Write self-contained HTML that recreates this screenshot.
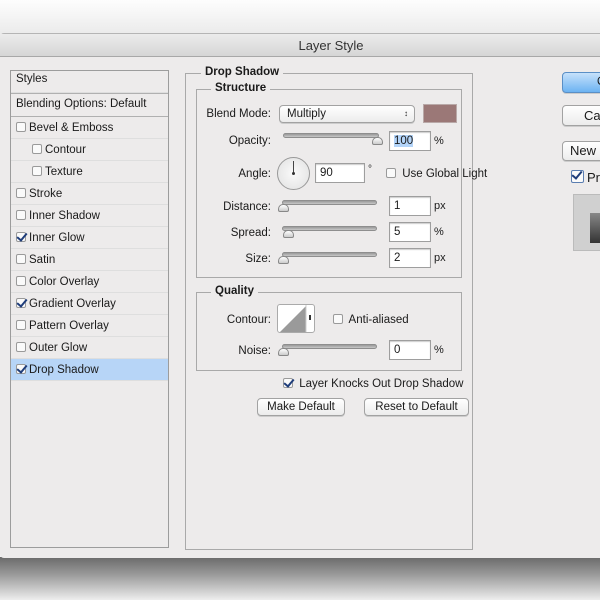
<!DOCTYPE html>
<html><head><meta charset="utf-8"><style>
*{margin:0;padding:0;box-sizing:border-box}
body{width:600px;height:600px;overflow:hidden;position:relative;background:#f4f4f4;font-family:"Lucida Grande","Liberation Sans","DejaVu Sans",sans-serif;font-size:12px;color:#1a1a1a}
.a{position:absolute}
#bgtop{left:0;top:0;width:600px;height:34px;background:linear-gradient(#fdfdfd,#ebebeb)}
#shadow{left:0;top:557px;width:600px;height:43px;background:linear-gradient(#6a6a6a,#999 40%,#d8d8d8 85%,#eee)}
#win{left:0;top:33px;width:600px;height:525px;background:#edebeb;border-radius:4px 0 0 4px;border-top:1px solid #b5b5b5}
#title{left:0;top:34px;width:600px;height:23px;background:linear-gradient(#ececec,#d6d6d6);border-bottom:1px solid #a8a8a8;text-align:center;line-height:23px;font-size:13px;color:#333;padding-left:62px}
#list{left:10px;top:70px;width:159px;height:478px;border:1px solid #9c9c9c;background:#edebeb}
.row{position:absolute;left:0;width:157px;height:22px;line-height:22px;border-bottom:1px solid #dedede;padding-left:5px;font-size:11.5px}
.cb{display:inline-block;width:10px;height:10px;border:1px solid #9a9a9a;border-radius:2px;background:#fafafa;vertical-align:-1px;margin-right:3px;position:relative}
.cb.on::after{content:"";position:absolute;left:2px;top:-2px;width:4px;height:8px;border:solid #1f3d7a;border-width:0 2px 2px 0;transform:rotate(40deg)}
.fs{border:1px solid #a9a9a9}
.leg{position:absolute;background:#edebeb;font-weight:bold;padding:0 4px;font-size:11.5px}
.lbl{position:absolute;text-align:right;font-size:11.5px}
.inp{position:absolute;background:#fff;border:1px solid #9e9e9e;height:20px;line-height:18px;padding-left:4px;font-size:11.5px;box-shadow:inset 0 1px 1px #ccc}
.sl{position:absolute;height:5px;background:linear-gradient(#999,#c8c8c8);border-radius:3px;border:1px solid #8e8e8e}
.th{position:absolute;width:11px;height:8px;background:linear-gradient(#fff,#ccc);border:1px solid #888;border-radius:5px 5px 2px 2px}
.btn{position:absolute;background:linear-gradient(#fff,#ececec);border:1px solid #a2a2a2;border-radius:4px;text-align:center;font-size:11.5px;box-shadow:0 1px 0 #ccc}
</style></head><body>
<div class="a" id="bgtop"></div>
<div class="a" id="shadow"></div>
<div class="a" id="win"></div>
<div class="a" id="title">Layer Style</div>

<div class="a" id="list">
<div class="row" style="top:0;height:22px;line-height:16px">Styles</div>
<div class="row" style="top:22px;height:24px;border-bottom:1px solid #b0b0b0;border-top:1px solid #b0b0b0;line-height:20px">Blending Options: Default</div>
<div class="row" style="top:46px"><span class="cb"></span>Bevel &amp; Emboss</div>
<div class="row" style="top:68px;padding-left:21px"><span class="cb"></span>Contour</div>
<div class="row" style="top:90px;padding-left:21px"><span class="cb"></span>Texture</div>
<div class="row" style="top:112px"><span class="cb"></span>Stroke</div>
<div class="row" style="top:134px"><span class="cb"></span>Inner Shadow</div>
<div class="row" style="top:156px"><span class="cb on"></span>Inner Glow</div>
<div class="row" style="top:178px"><span class="cb"></span>Satin</div>
<div class="row" style="top:200px"><span class="cb"></span>Color Overlay</div>
<div class="row" style="top:222px"><span class="cb on"></span>Gradient Overlay</div>
<div class="row" style="top:244px"><span class="cb"></span>Pattern Overlay</div>
<div class="row" style="top:266px"><span class="cb"></span>Outer Glow</div>
<div class="row" style="top:288px;background:#b7d5f7"><span class="cb on"></span>Drop Shadow</div>
</div>

<div class="a fs" style="left:185px;top:73px;width:288px;height:477px"></div>
<div class="leg" style="left:201px;top:66px">Drop Shadow</div>
<div class="a fs" style="left:196px;top:89px;width:266px;height:189px"></div>
<div class="leg" style="left:211px;top:82px">Structure</div>

<div class="lbl" style="left:195px;top:108px;width:76px">Blend Mode:</div>
<div class="btn" style="left:279px;top:105px;width:136px;height:18px;text-align:left;padding-left:7px;line-height:16px">Multiply<span style="position:absolute;right:6px;top:0;font-size:8px">&#x2195;</span></div>
<div class="a" style="left:423px;top:104px;width:34px;height:19px;background:#9b7877;border:1px solid #b9a9a8"></div>

<div class="lbl" style="left:195px;top:135px;width:76px">Opacity:</div>
<div class="sl" style="left:283px;top:133px;width:96px"></div>
<div class="th" style="left:372px;top:137px"></div>
<div class="inp" style="left:389px;top:131px;width:42px;line-height:19px"><span style="background:#b3d4f9">100</span></div>
<div class="a" style="left:434px;top:135px;font-size:11px">%</div>

<div class="lbl" style="left:195px;top:168px;width:76px">Angle:</div>
<div class="a" style="left:277px;top:157px;width:33px;height:33px;border-radius:50%;border:1px solid #999;background:radial-gradient(#fafafa,#e0e0e0)"></div>
<div class="a" style="left:293px;top:161px;width:1px;height:13px;background:#444"></div>
<div class="a" style="left:292px;top:172px;width:3px;height:3px;border-radius:50%;background:#333"></div>
<div class="inp" style="left:315px;top:163px;width:50px;line-height:19px">90</div>
<div class="a" style="left:368px;top:164px;font-size:10px">°</div>
<div class="a" style="left:386px;top:168px;font-size:11.5px"><span class="cb"></span> Use Global Light</div>

<div class="lbl" style="left:195px;top:201px;width:76px">Distance:</div>
<div class="sl" style="left:282px;top:200px;width:95px"></div>
<div class="th" style="left:278px;top:204px"></div>
<div class="inp" style="left:389px;top:196px;width:42px;line-height:19px">1</div>
<div class="a" style="left:434px;top:200px;font-size:11px">px</div>

<div class="lbl" style="left:195px;top:227px;width:76px">Spread:</div>
<div class="sl" style="left:282px;top:226px;width:95px"></div>
<div class="th" style="left:283px;top:230px"></div>
<div class="inp" style="left:389px;top:222px;width:42px;line-height:19px">5</div>
<div class="a" style="left:434px;top:226px;font-size:11px">%</div>

<div class="lbl" style="left:195px;top:253px;width:76px">Size:</div>
<div class="sl" style="left:282px;top:252px;width:95px"></div>
<div class="th" style="left:278px;top:256px"></div>
<div class="inp" style="left:389px;top:248px;width:42px;line-height:19px">2</div>
<div class="a" style="left:434px;top:252px;font-size:11px">px</div>

<div class="a fs" style="left:196px;top:292px;width:266px;height:79px"></div>
<div class="leg" style="left:211px;top:285px">Quality</div>
<div class="lbl" style="left:195px;top:314px;width:76px">Contour:</div>
<div class="a" style="left:277px;top:304px;width:38px;height:29px;background:#fff;border:1px solid #aaa;border-radius:3px;overflow:hidden">
<svg width="38" height="29" style="position:absolute;left:0;top:0"><polygon points="1,28 28,1 28,28" fill="#9a9a9a"/><line x1="28" y1="0" x2="28" y2="29" stroke="#ccc"/><rect x="31" y="10" width="2" height="5" fill="#333"/></svg></div>
<div class="a" style="left:333px;top:314px;font-size:11.5px"><span class="cb"></span> Anti-aliased</div>
<div class="lbl" style="left:195px;top:345px;width:76px">Noise:</div>
<div class="sl" style="left:282px;top:344px;width:95px"></div>
<div class="th" style="left:278px;top:348px"></div>
<div class="inp" style="left:389px;top:340px;width:42px;line-height:19px">0</div>
<div class="a" style="left:434px;top:344px;font-size:11px">%</div>

<div class="a" style="left:283px;top:378px;font-size:11.5px"><span class="cb on"></span> Layer Knocks Out Drop Shadow</div>
<div class="btn" style="left:257px;top:398px;width:88px;height:18px;line-height:17px">Make Default</div>
<div class="btn" style="left:364px;top:398px;width:105px;height:18px;line-height:17px">Reset to Default</div>

<div class="btn" style="left:562px;top:72px;width:50px;height:21px;background:linear-gradient(#c6e1fb,#6db3f2);border-color:#5a8fc6;line-height:19px;text-align:left;padding-left:34px">O</div>
<div class="btn" style="left:562px;top:105px;width:50px;height:21px;line-height:19px;text-align:left;padding-left:21px;font-size:13px">Ca</div>
<div class="btn" style="left:562px;top:141px;width:50px;height:20px;line-height:18px;text-align:left;padding-left:7px;font-size:13px">New</div>
<div class="a" style="left:571px;top:170px;font-size:13px"><span class="cb on" style="width:13px;height:13px;border-color:#5a7db0"></span>Pr</div>
<div class="a" style="left:573px;top:194px;width:30px;height:57px;background:#d0d0d0;border:1px solid #bbb"></div>
<div class="a" style="left:590px;top:213px;width:12px;height:30px;background:linear-gradient(#888,#333)"></div>
</body></html>
